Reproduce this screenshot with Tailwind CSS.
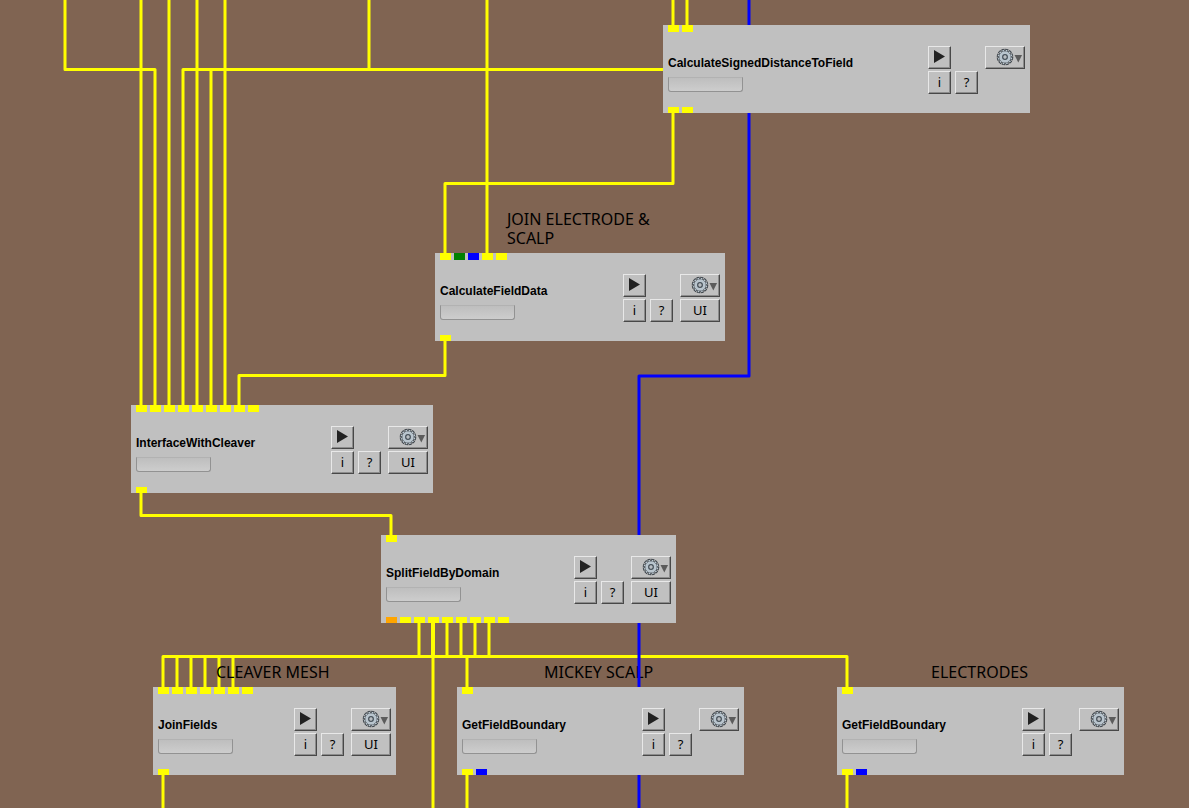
<!DOCTYPE html>
<html lang="en">
<head>
<meta charset="utf-8">
<meta name="viewport" content="width=device-width, initial-scale=1">
<title>Network editor</title>
<script src="https://cdn.jsdelivr.net/npm/@tailwindcss/browser@4"></script>
</head>
<body class="bg-[#806452] text-black">
<svg class="hidden" aria-hidden="true">
  <linearGradient id="steel" x1="0" y1="0" x2="1" y2="1"><stop offset="0" stop-color="#dbe4ea"/><stop offset="1" stop-color="#8fa0ae"/></linearGradient>
  <symbol id="play" viewBox="0 0 23 23"><path d="M6 4 17 10.500 6 17Z" fill="#222"/></symbol>
  <symbol id="gear" viewBox="0 0 40 23">
    <circle cx="20" cy="11" r="7" fill="none" stroke="#3c4248" stroke-width="2.600" stroke-dasharray="3 0.665"/>
    <circle cx="20" cy="11" r="6.200" fill="#b9c5ce" stroke="#454c53" stroke-width="1"/>
    <circle cx="20" cy="11" r="6.600" fill="none" stroke="#bcc8d0" stroke-width="1.500" stroke-dasharray="1.500 1.956" stroke-dashoffset="-0.700"/>
    <circle cx="20" cy="11" r="5.600" fill="url(#steel)"/>
    <circle cx="20" cy="11" r="2.300" fill="#d0d4d6" stroke="#454f58" stroke-width="1.300"/>
    <circle cx="20" cy="11" r="0.700" fill="#8d969d"/>
    <path d="M29.500 9h7.600l-3.800 7.400Z" fill="#5c5c5c"/>
  </symbol>
</svg>
<main class="relative min-h-screen w-full overflow-hidden font-['Liberation_Sans',Arial,sans-serif]">
  <svg class="absolute inset-0 size-full" fill="none" stroke="#ffff00" stroke-width="3" stroke-linejoin="round" aria-hidden="true">
    <path d="M65 0V69.5H155V405M141 0V405M169 0V405M197 0V405M225 0V405"/>
    <path d="M663 69.5H183V405M211 69.5V405M369 0V69.5M487 0V253M673 0V25M687 0V25"/>
    <path d="M673 113V183.5H445V253M445 341V375.5H239V405M141 493V515.5H391V535"/>
    <path d="M163 687V656.5H847V687M177 656.5V687M191 656.5V687M205 656.5V687M219 656.5V687M233 656.5V687M467 656.5V687"/>
    <path d="M419 623V656.5M433 623V808M447 623V656.5M461 623V656.5M475 623V656.5M489 623V656.5"/>
    <path d="M163 775V808M467 775V808M847 775V808"/>
    <path d="M433 623V656.5" stroke-width="4"/>
  </svg>

  <p class="absolute left-[507px] top-[210px] w-[160px] font-['Noto_Sans',sans-serif] text-[16px] leading-[19px]">JOIN ELECTRODE &amp; SCALP</p>
  <p class="absolute left-[216px] top-[663px] whitespace-nowrap font-['Noto_Sans',sans-serif] text-[16px] leading-[19px]">CLEAVER MESH</p>
  <p class="absolute left-[544px] top-[663px] whitespace-nowrap font-['Noto_Sans',sans-serif] text-[16px] leading-[19px]">MICKEY SCALP</p>
  <p class="absolute left-[931px] top-[663px] whitespace-nowrap font-['Noto_Sans',sans-serif] text-[16px] leading-[19px]">ELECTRODES</p>

  <svg class="absolute inset-0 size-full" fill="none" stroke="#0000ff" stroke-width="3" stroke-linejoin="round" aria-hidden="true">
    <path d="M749 0V376H639V808"/>
  </svg>

  <div id="nodes"></div>
</main>

<template id="node">
  <section class="absolute flex h-[88px] flex-col justify-between bg-[#c0c0c0] px-[5px]">
    <div data-in class="flex h-[7px] gap-[3px]"></div>
    <div class="flex items-center justify-between">
      <div class="flex flex-col gap-[6px] pt-[8px]">
        <h2 class="text-[12px] leading-[16px] font-bold"></h2>
        <div role="progressbar" aria-label="Execution progress" aria-valuenow="0" class="h-[15px] w-[75px] rounded-b-[3px] border border-[#929292] border-t-[#b2b2b2] bg-linear-to-b from-[#bebebe] to-[#cdcdcd]"></div>
      </div>
      <div class="grid grid-cols-[23px_23px_43px] gap-x-[4px] gap-y-[2px] font-['Noto_Sans',sans-serif] text-[13px] leading-[20px]">
        <button aria-label="Execute" class="h-[23px] border border-t-[#e8e8e8] border-l-[#e8e8e8] border-r-[#484848] border-b-[#484848] shadow-[inset_-1px_-1px_0_#8c8c8c]"><svg class="-m-px size-[23px] max-w-none"><use href="#play"/></svg></button>
        <span></span>
        <button aria-label="Module actions" class="ml-[3px] h-[23px] w-[40px] border border-t-[#e8e8e8] border-l-[#e8e8e8] border-r-[#484848] border-b-[#484848] shadow-[inset_-1px_-1px_0_#8c8c8c]"><svg class="-m-px h-[23px] w-[40px] max-w-none"><use href="#gear"/></svg></button>
        <button aria-label="Log" class="h-[23px] border border-t-[#e8e8e8] border-l-[#e8e8e8] border-r-[#484848] border-b-[#484848] shadow-[inset_-1px_-1px_0_#8c8c8c]">i</button>
        <button aria-label="Help" class="h-[23px] border border-t-[#e8e8e8] border-l-[#e8e8e8] border-r-[#484848] border-b-[#484848] shadow-[inset_-1px_-1px_0_#8c8c8c]">?</button>
        <button data-ui class="ml-[3px] h-[23px] w-[40px] border border-t-[#e8e8e8] border-l-[#e8e8e8] border-r-[#484848] border-b-[#484848] shadow-[inset_-1px_-1px_0_#8c8c8c]">UI</button>
      </div>
    </div>
    <div data-out class="flex h-[6px] gap-[3px]"></div>
  </section>
</template>
<script>
const portColor = { y: 'bg-[#ffff00]', g: 'bg-[#008000]', b: 'bg-[#0000ff]', o: 'bg-[#ffa500]' };
const nodes = [
  { name: 'CalculateSignedDistanceToField', x: 663, y: 25, w: 367, inputs: 'yy', outputs: 'yy', ui: false },
  { name: 'CalculateFieldData', x: 435, y: 253, w: 290, inputs: 'ygbyy', outputs: 'y', ui: true },
  { name: 'InterfaceWithCleaver', x: 131, y: 405, w: 302, inputs: 'yyyyyyyyy', outputs: 'y', ui: true },
  { name: 'SplitFieldByDomain', x: 381, y: 535, w: 295, inputs: 'y', outputs: 'oyyyyyyyy', ui: true },
  { name: 'JoinFields', x: 153, y: 687, w: 243, inputs: 'yyyyyyy', outputs: 'y', ui: true },
  { name: 'GetFieldBoundary', x: 457, y: 687, w: 287, inputs: 'y', outputs: 'yb', ui: false },
  { name: 'GetFieldBoundary', x: 837, y: 687, w: 287, inputs: 'y', outputs: 'yb', ui: false },
];
const addPorts = (row, ports) => {
  for (const p of ports) {
    const port = document.createElement('span');
    port.className = 'w-[11px] ' + portColor[p];
    row.append(port);
  }
};
for (const n of nodes) {
  const el = document.getElementById('node').content.firstElementChild.cloneNode(true);
  el.style.left = n.x + 'px';
  el.style.top = n.y + 'px';
  el.style.width = n.w + 'px';
  el.querySelector('h2').textContent = n.name;
  addPorts(el.querySelector('[data-in]'), n.inputs);
  addPorts(el.querySelector('[data-out]'), n.outputs);
  if (!n.ui) el.querySelector('[data-ui]').remove();
  document.getElementById('nodes').append(el);
}
</script>
</body>
</html>
